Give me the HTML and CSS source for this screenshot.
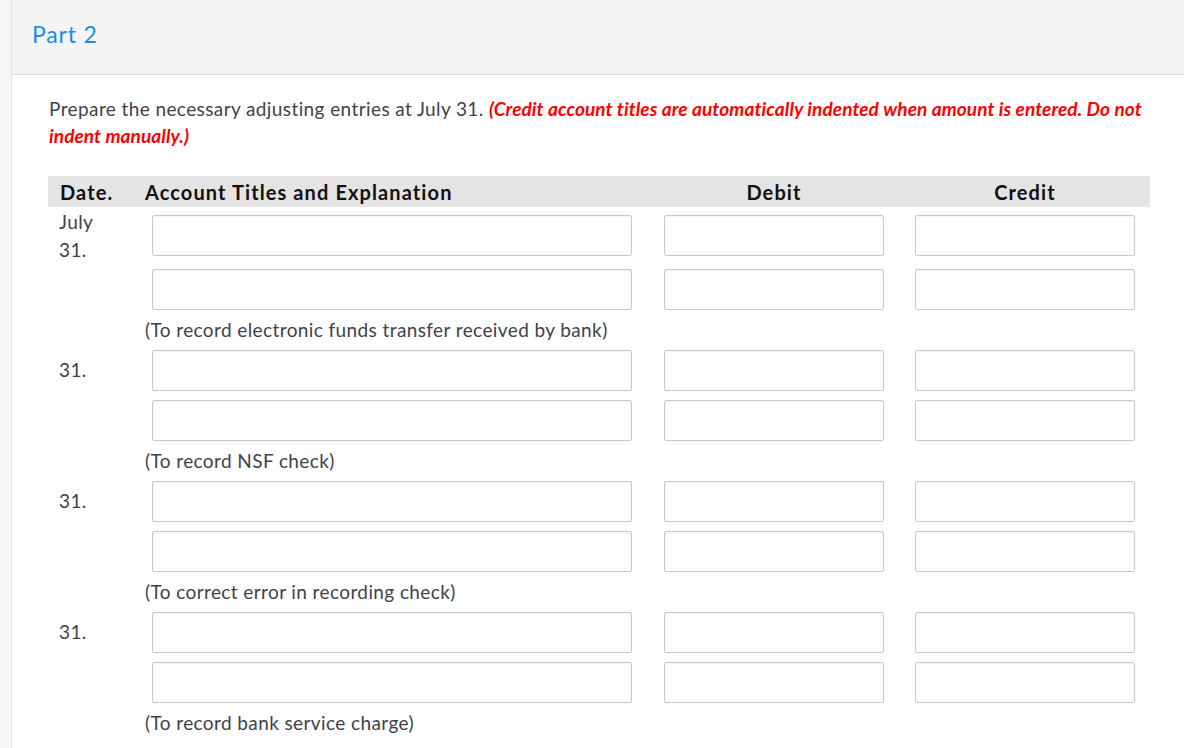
FILE: index.html
```html
<!DOCTYPE html>
<html lang="en">
<head>
    <meta charset="UTF-8">
    <title>Part 2</title>
    <link rel="stylesheet" href="styles.css">
</head>
<body>
    <div class="page">
        <div class="rail"></div>
        <div class="main">
            <div class="part-head">Part 2</div>

            <div class="content">
                <p class="instr">Prepare the necessary adjusting entries at July 31. <em class="warn">(Credit account titles are automatically indented when amount is entered. Do not indent manually.)</em></p>

                <table class="journal">
                    <colgroup>
                        <col class="c-date">
                        <col class="c-acct">
                        <col class="c-amt">
                        <col class="c-amt2">
                    </colgroup>
                    <thead>
                        <tr>
                            <th class="date">Date.</th>
                            <th class="acct">Account Titles and Explanation</th>
                            <th>Debit</th>
                            <th>Credit</th>
                        </tr>
                    </thead>
                    <tbody>
                        <!-- entry 1 -->
                        <tr>
                            <td class="date date-long">July<br>31.</td>
                            <td><input class="in-acct" type="text"></td>
                            <td><input class="in-amt" type="text"></td>
                            <td><input class="in-amt" type="text"></td>
                        </tr>
                        <tr>
                            <td class="date"></td>
                            <td><input class="in-acct" type="text"></td>
                            <td><input class="in-amt" type="text"></td>
                            <td><input class="in-amt" type="text"></td>
                        </tr>
                        <tr class="expl">
                            <td></td>
                            <td colspan="3">(To record electronic funds transfer received by bank)</td>
                        </tr>

                        <!-- entry 2 -->
                        <tr>
                            <td class="date">31.</td>
                            <td><input class="in-acct" type="text"></td>
                            <td><input class="in-amt" type="text"></td>
                            <td><input class="in-amt" type="text"></td>
                        </tr>
                        <tr>
                            <td class="date"></td>
                            <td><input class="in-acct" type="text"></td>
                            <td><input class="in-amt" type="text"></td>
                            <td><input class="in-amt" type="text"></td>
                        </tr>
                        <tr class="expl">
                            <td></td>
                            <td colspan="3">(To record NSF check)</td>
                        </tr>

                        <!-- entry 3 -->
                        <tr>
                            <td class="date">31.</td>
                            <td><input class="in-acct" type="text"></td>
                            <td><input class="in-amt" type="text"></td>
                            <td><input class="in-amt" type="text"></td>
                        </tr>
                        <tr>
                            <td class="date"></td>
                            <td><input class="in-acct" type="text"></td>
                            <td><input class="in-amt" type="text"></td>
                            <td><input class="in-amt" type="text"></td>
                        </tr>
                        <tr class="expl">
                            <td></td>
                            <td colspan="3">(To correct error in recording check)</td>
                        </tr>

                        <!-- entry 4 -->
                        <tr>
                            <td class="date">31.</td>
                            <td><input class="in-acct" type="text"></td>
                            <td><input class="in-amt" type="text"></td>
                            <td><input class="in-amt" type="text"></td>
                        </tr>
                        <tr>
                            <td class="date"></td>
                            <td><input class="in-acct" type="text"></td>
                            <td><input class="in-amt" type="text"></td>
                            <td><input class="in-amt" type="text"></td>
                        </tr>
                        <tr class="expl">
                            <td></td>
                            <td colspan="3">(To record bank service charge)</td>
                        </tr>
                    </tbody>
                </table>
            </div>
        </div>
    </div>
</body>
</html>
```

FILE: styles.css
```css
body { margin: 0; font-family: Lato, "Open Sans", Arial, sans-serif; color: #3d434a; background: #fff; }
.page { display: flex; min-height: 748px; }
.rail { width: 11px; background-color: #f7f7f7; border-right: 1px solid #e2e2e2; flex-shrink: 0; }
.main { flex: 1; }

/* cabecera de la parte */
.part-head {
    height: 53px;
    padding: 21px 0 0 20px;
    background-color: #f4f4f4;
    border-bottom: 1px solid #dcdcdc;
    font-size: 23px;
    line-height: 26px;
    letter-spacing: 0.8px;
    color: #1a8ee4;
}

.content { padding: 0 34px 0 36px; }

.instr {
    margin: 20px 0 0;
    font-size: 19px;
    line-height: 27px;
    letter-spacing: 0.4px;
    padding-left: 1px;
}
.warn { color: #ff0000; font-weight: bold; font-style: italic; letter-spacing: 0.1px; }

/* tabla del diario */
.journal { margin-top: 27px; border-collapse: collapse; border-spacing: 0; table-layout: fixed; width: 1102px; font-size: 19px; letter-spacing: 0.4px; }
.c-date { width: 97px; }
.c-acct { width: 503px; }
.c-amt { width: 252px; }
.c-amt2 { width: 250px; }

.journal th {
    height: 31px;
    padding: 0;
    background-color: #e4e4e4;
    color: #111;
    font-size: 20px;
    font-weight: bold;
    letter-spacing: 1.1px;
    text-align: center;
    vertical-align: middle;
}
.journal th.date { text-align: left; padding-left: 12px; }
.journal th.acct { text-align: left; }

.journal td { height: 50px; padding: 0; vertical-align: middle; text-align: center; }
.journal td.date { text-align: left; padding-left: 11px; line-height: 28px; }
.journal td.date-long { padding-top: 1px; }
.journal tr.expl td { height: 31px; text-align: left; }

input {
    box-sizing: border-box;
    height: 41px;
    margin: 0;
    padding: 0 8px;
    border: 1px solid #c9c9c9;
    border-radius: 2px;
    box-shadow: inset 0 1px 2px rgba(0, 0, 0, 0.06);
    background: #fff;
    font-family: inherit;
    font-size: 16px;
    display: block;
}
.in-acct { width: 480px; margin-left: 7px; }
.in-amt { width: 220px; margin: 0 auto; }
```
